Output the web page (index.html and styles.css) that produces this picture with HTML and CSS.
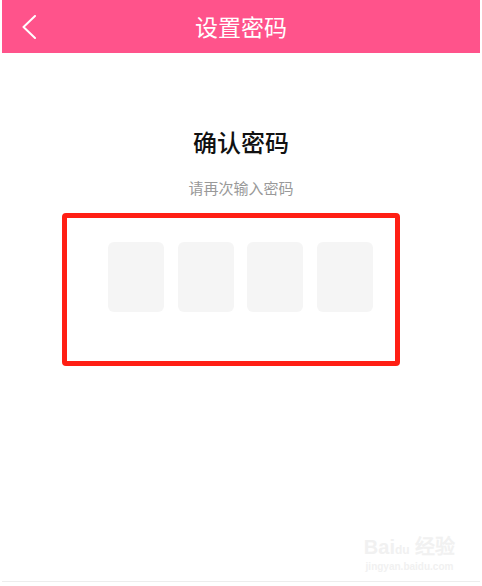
FILE: index.html
```html
<!DOCTYPE html>
<html lang="zh-CN">
<head>
<meta charset="utf-8">
<title>设置密码</title>
<link rel="stylesheet" href="styles.css">
</head>
<body>
<div class="page">
  <header class="topbar">
    <div class="back">
      <svg width="14" height="24" viewBox="0 0 14 24"><polyline points="13,1 1.5,12 13,23" fill="none" stroke="#fff" stroke-width="2" stroke-linecap="round" stroke-linejoin="round"/></svg>
    </div>
    <h1 class="title">设置密码</h1>
    <div></div>
  </header>
  <main class="content">
    <h2 class="heading">确认密码</h2>
    <p class="hint">请再次输入密码</p>
    <div class="frame">
      <div class="codes">
        <div class="cell"></div>
        <div class="cell"></div>
        <div class="cell"></div>
        <div class="cell"></div>
      </div>
    </div>
  </main>
  <footer class="foot"></footer>
  <div class="watermark">
    <div class="wm-logo">Bai<span class="paw">du</span> 经验</div>
    <div class="wm-url">jingyan.baidu.com</div>
  </div>
</div>
</body>
</html>
```
FILE: styles.css
```css
* { box-sizing: border-box; }
html, body { margin: 0; padding: 0; background: #fff; }
body { font-family: "Noto Sans CJK SC", "Noto Sans", sans-serif; }
.page {
  position: relative;
  width: 482px;
  height: 586px;
  display: flex;
  flex-direction: column;
}
.topbar {
  margin: 0 2px;
  height: 53px;
  background: #ff538b;
  display: grid;
  grid-template-columns: 1fr auto 1fr;
  align-items: center;
}
.back { padding-left: 20px; display: flex; align-items: center; }
.back svg { display: block; }
.title {
  margin: 0;
  color: #fff;
  font-size: 23px;
  font-weight: 400;
  line-height: 1;
}
.content {
  display: flex;
  flex-direction: column;
  align-items: center;
}
.heading {
  margin: 76px 0 0;
  font-size: 24px;
  line-height: 26px;
  font-weight: 500;
  color: #111;
}
.hint {
  margin: 25px 0 0;
  font-size: 15px;
  line-height: 16px;
  color: #999;
}
.frame {
  align-self: flex-start;
  margin: 17px 0 0 62px;
  width: 338px;
  border: 5px solid #ff1f14;
  border-radius: 4px;
  padding: 24px 0 49px 41px;
}
.codes {
  display: flex;
  gap: 13.7px;
}
.cell {
  width: 56px;
  height: 70px;
  background: #f5f5f5;
  border-radius: 6px;
}
.foot {
  margin: auto 2px 0;
  height: 5px;
  border-top: 1px solid #ededed;
}
.watermark {
  position: absolute;
  left: 362px;
  top: 536px;
  width: 95px;
  color: #f1f1f1;
  font-family: "Liberation Sans", sans-serif;
  text-align: center;
}
.wm-logo { font-size: 20px; font-weight: 700; line-height: 22px; white-space: nowrap; }
.paw { font-size: 12px; }
.wm-url { font-size: 10px; line-height: 12px; font-weight: 700; }
```
